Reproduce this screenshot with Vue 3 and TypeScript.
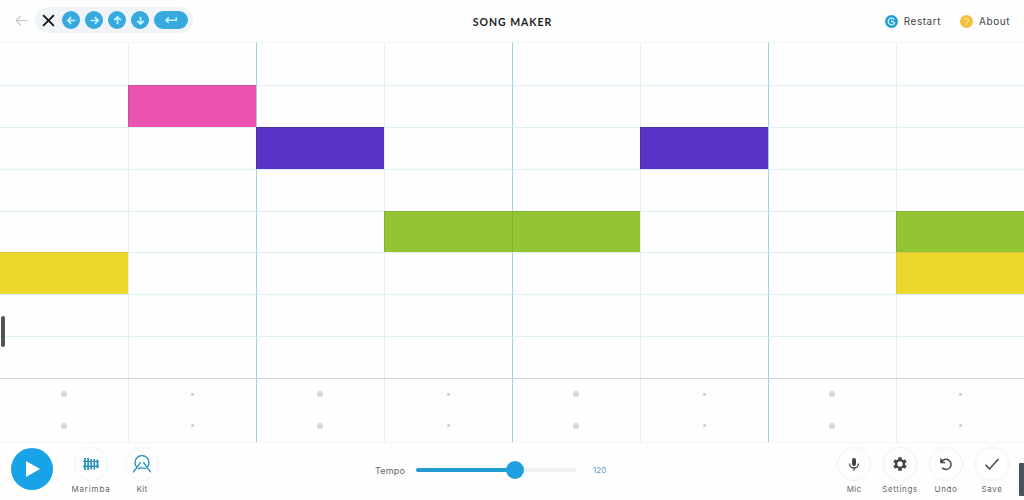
<template>
  <div class="song-maker">
    <header class="top-bar">
      <div class="top-left">
        <svg class="back" viewBox="0 0 12 12"><path d="M11.5 6H1M5.5 1.5L1 6l4.5 4.5" /></svg>
        <div class="key-strip">
          <svg class="close" viewBox="0 0 12 12"><path d="M1 1l10 10M11 1L1 11" /></svg>
          <span v-for="angle in arrowAngles" :key="angle" class="key">
            <svg viewBox="0 0 10 10">
              <path :transform="`rotate(${angle} 5 5)`" d="M8.5 5H1.8M4.7 2L1.7 5l3 3" />
            </svg>
          </span>
          <span class="key enter">
            <svg viewBox="0 0 14 10"><path d="M12.3 2.5v2.7H2M4.8 2.4L2 5.2 4.8 8" /></svg>
          </span>
        </div>
      </div>
      <h1>SONG MAKER</h1>
      <nav class="top-right">
        <button class="link">
          <svg viewBox="0 0 12 12">
            <circle cx="6" cy="6" r="6" fill="#209fd5" />
            <path d="M8.6 4.2A3.1 3.1 0 1 0 9.1 6.5M6.1 4.3v2h2.5" fill="none" stroke="#d8f6ff" stroke-width="1.1" />
          </svg>
          <span>Restart</span>
        </button>
        <button class="link">
          <svg viewBox="0 0 12 12">
            <circle cx="6" cy="6" r="6" fill="#f5be3b" />
            <path d="M4.2 4.8a1.8 1.8 0 1 1 2.6 1.6c-.6.3-.8.5-.8 1.1M6 8.4v1" fill="none" stroke="#fbe5a9" stroke-width="1.1" />
          </svg>
          <span>About</span>
        </button>
      </nav>
    </header>

    <main class="board">
      <div class="melody">
        <template v-for="row in rows" :key="row">
          <div
            v-for="col in columns"
            :key="col"
            class="cell"
            :class="[{ strong: col % 2 === 1 }, notes[`${row}-${col}`]]"
          ></div>
        </template>
        <span class="handle"></span>
      </div>
      <div class="rhythm">
        <div v-for="n in columns * 2" :key="n" class="beat" :class="{ strong: n % 2 === 1 }">
          <i :class="{ small: n % 2 === 0 }"></i>
        </div>
      </div>
    </main>

    <footer class="controls">
      <div class="instruments">
        <button class="play"><svg viewBox="0 0 14 18"><path d="M0 1v16l14-8z" /></svg></button>
        <button class="tool blue">
          <span class="ring">
            <svg viewBox="0 0 18 18">
              <path d="M.8 6.5h16.4M.8 11.3h16.4" stroke-width="1.2" />
              <path d="M3 3v12M6.1 3v12M9.2 4v10.4M12.3 4v10.4M15.4 4.6v8.6" stroke-width="1.7" />
            </svg>
          </span>
          <span class="marimba">Marimba</span>
        </button>
        <button class="tool blue kit">
          <span class="ring">
            <svg viewBox="0 0 18 18">
              <path d="M3.7 12.2a7 7 0 1 1 10.6 0M4.8 13.7c2.6-1 5.8-1 8.4 0" />
              <path d="M.2 17.4L6.9 8.4M17.8 17.4L11.1 8.4" />
              <path d="M7.2 7.3v1.2M10.8 7.3v1.2" stroke-width="1.8" />
            </svg>
          </span>
          <span>Kit</span>
        </button>
      </div>

      <div class="tempo">
        <span class="tempo-label">Tempo</span>
        <div class="track">
          <div class="fill" :style="{ width: tempoPercent + '%' }"><span class="knob"></span></div>
        </div>
        <span class="tempo-value">{{ tempo }}</span>
      </div>

      <div class="actions">
        <button class="tool">
          <span class="ring">
            <svg viewBox="0 0 18 18">
              <rect x="7" y="3" width="4" height="8" rx="2" fill="#444" stroke="none" />
              <path d="M4.5 8.5a4.5 4.5 0 0 0 9 0M9 13v2.8" />
            </svg>
          </span>
          <span>Mic</span>
        </button>
        <button class="tool">
          <span class="ring">
            <svg viewBox="0 0 18 18">
              <circle cx="9" cy="9" r="3.9" stroke-width="2.4" />
              <path
                v-for="n in 6"
                :key="n"
                :transform="`rotate(${n * 60} 9 9)`"
                d="M9 5.2V2.2"
                stroke-width="3.4"
              />
            </svg>
          </span>
          <span class="settings">Settings</span>
        </button>
        <button class="tool">
          <span class="ring">
            <svg viewBox="0 0 18 18"><path d="M4 3.5v4h4M4.3 7.3A5.1 5.1 0 1 1 5.2 12.8" stroke-width="1.5" /></svg>
          </span>
          <span class="undo">Undo</span>
        </button>
        <button class="tool">
          <span class="ring">
            <svg viewBox="0 0 18 18"><path d="M2.5 9.8l4 4.2 9-10" stroke-width="1.5" /></svg>
          </span>
          <span class="save">Save</span>
        </button>
      </div>
      <span class="side-tab"></span>
    </footer>
  </div>
</template>

<script lang="ts" setup>
import { computed, ref } from 'vue';

type NoteColor = 'pink' | 'purple' | 'green' | 'yellow';

const rows = 8;
const columns = 8;
const arrowAngles = [0, 180, 90, 270];

// keyed by row-column, counted from the top left
const notes: Record<string, NoteColor> = {
  '2-2': 'pink',
  '3-3': 'purple',
  '3-6': 'purple',
  '5-4': 'green',
  '5-5': 'green',
  '5-8': 'green',
  '6-1': 'yellow',
  '6-8': 'yellow',
};

const tempo = ref(120);
const tempoPercent = computed(() => ((tempo.value + 3) / 200) * 100);
</script>

<style>
body {
  margin: 0;
  overflow: hidden;
}
</style>

<style scoped>
.song-maker {
  display: flex;
  flex-direction: column;
  width: 1024px;
  height: 500px;
  overflow: hidden;
  background: #fefefe;
  color: #444;
  font-family: Inter, "Liberation Sans", sans-serif;
}

button {
  padding: 0;
  border: 0;
  background: none;
  color: inherit;
  font: inherit;
}

svg {
  display: block;
  fill: none;
  stroke: currentColor;
}

.top-bar {
  display: grid;
  grid-template-columns: 1fr auto 1fr;
  align-items: center;
  box-sizing: border-box;
  height: 42px;
  padding: 0 14px 0 15px;
}

.top-left,
.key-strip,
.top-right,
.link {
  display: flex;
  align-items: center;
}

.top-left {
  padding-bottom: 2px;
}

.back {
  width: 13px;
  height: 13px;
  margin-right: 7px;
  stroke: #c2c2c2;
}

.key-strip {
  box-sizing: border-box;
  height: 26px;
  gap: 5px;
  padding: 0 5px 0 7px;
  border-radius: 13px;
  background: #f0f4f6;
}

.close {
  width: 13px;
  height: 13px;
  margin-right: 2px;
  stroke: #111;
  stroke-width: 1.7;
}

.key {
  display: flex;
  align-items: center;
  justify-content: center;
  width: 18px;
  height: 18px;
  border-radius: 9px;
  background: #36a9de;
}

.key svg {
  width: 11px;
  height: 11px;
  stroke: #c9f5ff;
  stroke-width: 1.5;
}

.key.enter {
  width: 34px;
}

.key.enter svg {
  width: 14px;
  height: 10px;
}

h1 {
  margin: 2px 0 0;
  color: #1c1c1c;
  font: 700 10.5px Lato, sans-serif;
  letter-spacing: 1px;
  line-height: 14px;
}

.top-right {
  justify-content: flex-end;
  gap: 19px;
}

.link {
  gap: 6px;
  font-size: 10px;
  letter-spacing: 0.55px;
}

.link svg {
  width: 13px;
  height: 13px;
  stroke: none;
}

.melody {
  position: relative;
  display: grid;
  grid-template-columns: repeat(8, 1fr);
  grid-template-rows: 43px repeat(7, 1fr);
  height: 336px;
}

.cell,
.beat {
  box-sizing: border-box;
  border-left: 1px solid #e3f1f7;
}

.cell {
  border-top: 1px solid #dcf0f6;
}

.cell:nth-child(-n + 8) {
  border-top-color: #f1f6f8;
}

.cell.strong,
.beat.strong {
  border-left-color: #a3cfe8;
}

.cell:nth-child(8n + 1),
.beat:nth-child(8n + 1) {
  border-left: 0;
}

.cell.pink {
  background: #ea54b0;
  border-color: #c75398;
}

.cell.purple {
  background: #5933c6;
  border-color: #4c31a3;
}

.cell.green {
  background: #93c433;
  border-color: #86b13a;
}

.cell.yellow {
  background: #ecd72d;
  border-color: #ddca34;
}

.handle {
  position: absolute;
  top: 274px;
  left: 1px;
  width: 4px;
  height: 31px;
  border-radius: 2px;
  background: #505658;
}

.rhythm {
  display: grid;
  grid-template-columns: repeat(8, 1fr);
  grid-template-rows: 31px 32px;
  box-sizing: border-box;
  height: 64px;
  border-top: 1px solid #d0d4d6;
}

.beat {
  display: flex;
  align-items: center;
  justify-content: center;
  padding: 0 1px 1px 0;
}

.beat i {
  width: 6px;
  height: 6px;
  border-radius: 50%;
  background: #d9d9d9;
}

.beat i.small {
  width: 3px;
  height: 3px;
  background: #cacaca;
}

.controls {
  position: relative;
  display: grid;
  grid-template-columns: 375px 1fr auto;
  box-sizing: border-box;
  height: 58px;
  padding-right: 9px;
  border-top: 1px solid #f3f5f6;
}

.instruments,
.actions {
  display: flex;
  align-items: flex-start;
}

.instruments {
  padding-left: 11px;
}

.play {
  display: flex;
  align-items: center;
  justify-content: center;
  width: 42px;
  height: 42px;
  margin: 5px 15px 0 0;
  border-radius: 50%;
  background: #18a3e8;
}

.play svg {
  width: 14px;
  height: 18px;
  margin-left: 2px;
  fill: #fff;
  stroke: none;
}

.tool {
  display: flex;
  flex-direction: column;
  align-items: center;
  width: 46px;
  padding-top: 4px;
  color: #444;
  font-size: 8px;
  letter-spacing: 0.3px;
  line-height: 10px;
  white-space: nowrap;
}

.tool > span:last-child {
  color: #666;
}

.tool.kit {
  margin-left: 5px;
}

.ring {
  display: flex;
  align-items: center;
  justify-content: center;
  box-sizing: border-box;
  width: 34px;
  height: 34px;
  margin-bottom: 3px;
  border: 1px solid #eff0f1;
  border-radius: 50%;
}

.ring svg {
  width: 18px;
  height: 18px;
  stroke-width: 1.3;
}

.blue .ring {
  color: #238eb9;
  border-color: #eef5f7;
}

.tool .marimba {
  letter-spacing: 0.85px;
}

.tool .settings,
.tool .undo,
.tool .save {
  letter-spacing: 0.6px;
}

.tempo {
  display: flex;
  align-items: center;
  height: 54px;
  color: #666;
  font-size: 9px;
}

.tempo-label {
  width: 41px;
  letter-spacing: 0.2px;
}

.track {
  width: 161px;
  height: 4px;
  border-radius: 2px;
  background: #f0f1f1;
}

.fill {
  position: relative;
  height: 4px;
  border-radius: 2px;
  background: #229bd0;
}

.knob {
  position: absolute;
  top: -7px;
  right: -9px;
  width: 18px;
  height: 18px;
  border-radius: 50%;
  background: #1d9fe1;
}

.tempo-value {
  margin-left: 16px;
  color: #5b9cc8;
  font-size: 8px;
}

.side-tab {
  position: absolute;
  top: 20px;
  right: 0;
  width: 5px;
  height: 33px;
  border-radius: 1px 0 0 1px;
  background: #4b5259;
}
</style>
